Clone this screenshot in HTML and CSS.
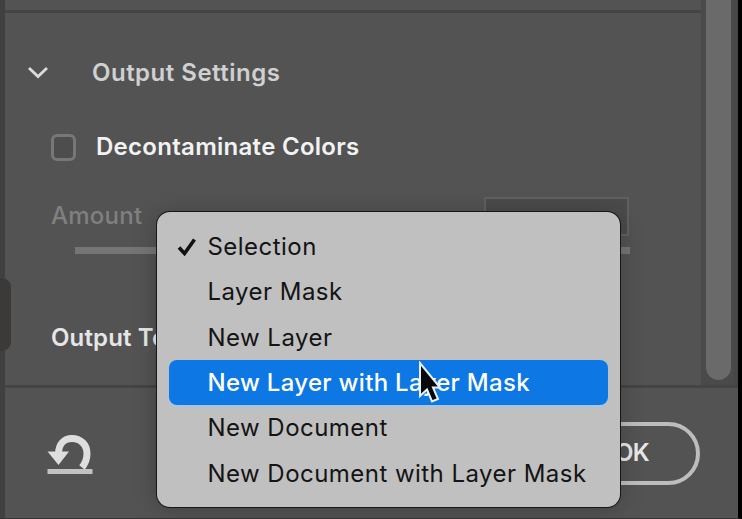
FILE: index.html
```
<!DOCTYPE html>
<html lang="en">
<head>
<meta charset="utf-8">
<title>Output Settings</title>
<link rel="stylesheet" href="styles.css">
</head>
<body>
<div class="window">
  <div class="panel">
    <div class="body">
      <div class="settings">
        <div class="previous"></div>
        <div class="heading">
          <svg class="chevron" width="24" height="16" viewBox="0 0 24 16"><path d="M3 3 12 11.500l9-8.500"/></svg>
          <span class="label title">Output Settings</span>
        </div>
        <div class="check-row">
          <span class="checkbox"></span>
          <span class="label decon">Decontaminate Colors</span>
        </div>
        <div class="amount-row">
          <span class="label amount">Amount</span>
          <span class="field"></span>
        </div>
        <div class="slider"></div>
        <div class="output-row"><span class="label output">Output To</span></div>
      </div>
      <div class="scrollbar"><div class="thumb"></div></div>
    </div>
    <div class="footer">
      <svg class="reset" width="48" height="44" viewBox="0 0 48 44">
        <path class="arc" d="M11.500 22C11.500 12 17 6.500 25 6.500c8.500 0 15 6 15 15 0 5.500-1.500 9.500-5 14"/>
        <path class="head" d="M.5 19.500h21.500L11.500 33z"/>
        <path class="base" d="M.5 39.500h45"/>
      </svg>
      <div class="ok"><span class="label ok-label">OK</span></div>
    </div>
  </div>
  <div class="side-tab"></div>
  <div class="menu">
    <div class="item"><svg class="tick" width="20" height="20" viewBox="0 0 20 20"><path d="m2 10.500 5.500 6L17.500 2.500"/></svg><span>Selection</span></div>
    <div class="item"><span>Layer Mask</span></div>
    <div class="item"><span>New Layer</span></div>
    <div class="item active"><span>New Layer with Layer Mask</span></div>
    <div class="item"><span>New Document</span></div>
    <div class="item"><span>New Document with Layer Mask</span></div>
  </div>
  <svg class="cursor" width="26" height="44" viewBox="0 0 26 44"><path d="M2 2v33l7-6.500 5 12 6-2.500-5-11.500h7z"/></svg>
</div>
</body>
</html>
```
FILE: styles.css
```
* { box-sizing: border-box; }
body { margin: 0; background: #000; }
.window {
  position: relative;
  width: 742px;
  height: 519px;
  overflow: hidden;
  font: 400 24px/30px Inter, "Liberation Sans", sans-serif;
  padding-left: 5px;
  background: linear-gradient(90deg, #404040 5px, #535353 5px);
  border-right: 4px solid #000;
  border-bottom: 1px solid #343434;
}
.panel { display: flex; flex-direction: column; height: 100%; }
.body { display: flex; height: 388px; border-bottom: 3px solid #444; }
.settings { flex: 1; }
.previous { height: 13px; border-bottom: 3px solid #444; }
.label { white-space: nowrap; font-weight: 500; letter-spacing: .25px; }
.heading { display: flex; align-items: center; height: 120px; padding-left: 21px; }
.chevron { margin-right: 42px; fill: none; stroke: #dcdcdc; stroke-width: 2.8; }
.label.title { color: #d0d0d0; font-weight: 600; letter-spacing: .5px; }
.check-row { display: flex; align-items: center; height: 28px; padding-left: 46px; }
.checkbox { width: 25px; height: 27px; margin-right: 20px; border: 3px solid #777; border-radius: 6px; background: #4d4d4d; }
.label.decon { color: #f2f2f2; font-weight: 600; letter-spacing: .28px; }
.amount-row { display: flex; justify-content: space-between; height: 40px; margin-top: 36px; padding: 4px 72px 0 46px; }
.amount { color: #808080; }
.field { width: 145px; height: 39px; margin-top: -4px; border: 2px solid #606060; background: #4b4b4b; }
.slider { width: 555px; height: 7px; margin: 10px 0 0 70px; background: #757575; }
.output-row { padding: 69px 0 0 46px; }
.label.output { color: #e6e6e6; font-weight: 600; letter-spacing: .15px; }
.scrollbar { width: 37px; padding-left: 5px; background: linear-gradient(90deg, #4a4a4a 0 31px, #454545); }
.thumb { width: 25px; height: 380px; background: #6a6a6a; border-radius: 0 0 13px 13px; }
.footer { display: flex; flex: 1; justify-content: space-between; padding: 44px 38px 0 42px; }
.reset { fill: none; stroke: #dedede; }
.arc { stroke-width: 7; }
.head { fill: #dedede; stroke: none; }
.base { stroke: #c2c2c2; stroke-width: 5; }
.ok { width: 140px; height: 63px; margin-top: -10px; padding: 12px 0 0 51px; border: 4px solid #bdbdbd; border-radius: 32px; }
.label.ok-label { color: #e8e8e8; font-weight: 600; letter-spacing: -.6px; }
.side-tab { position: absolute; left: 0; top: 278px; width: 11px; height: 73px; border-radius: 0 9px 9px 0; background: #3b3a38; }
.menu {
  position: absolute;
  left: 157px;
  top: 212px;
  width: 463px;
  height: 295px;
  padding: 12px;
  border-radius: 13px;
  background: #c0c0c0;
  box-shadow: 0 0 0 1px #171717, 0 2px 24px rgba(0, 0, 0, .22);
}
.item { position: relative; display: flex; align-items: center; height: 45.3px; padding: 1px 0 0 38.500px; border-radius: 8px; color: #141414; letter-spacing: .46px; white-space: nowrap; }
.active { background: #0d77e3; color: #fff; font-weight: 500; letter-spacing: .3px; box-shadow: 0 2px 2px #a9c5e6; }
.tick { position: absolute; left: 8px; top: 13px; fill: none; stroke: #111; stroke-width: 3.6; }
.cursor { position: absolute; left: 418px; top: 361px; fill: #080808; stroke: #e8f1fb; stroke-width: 2; }
```
